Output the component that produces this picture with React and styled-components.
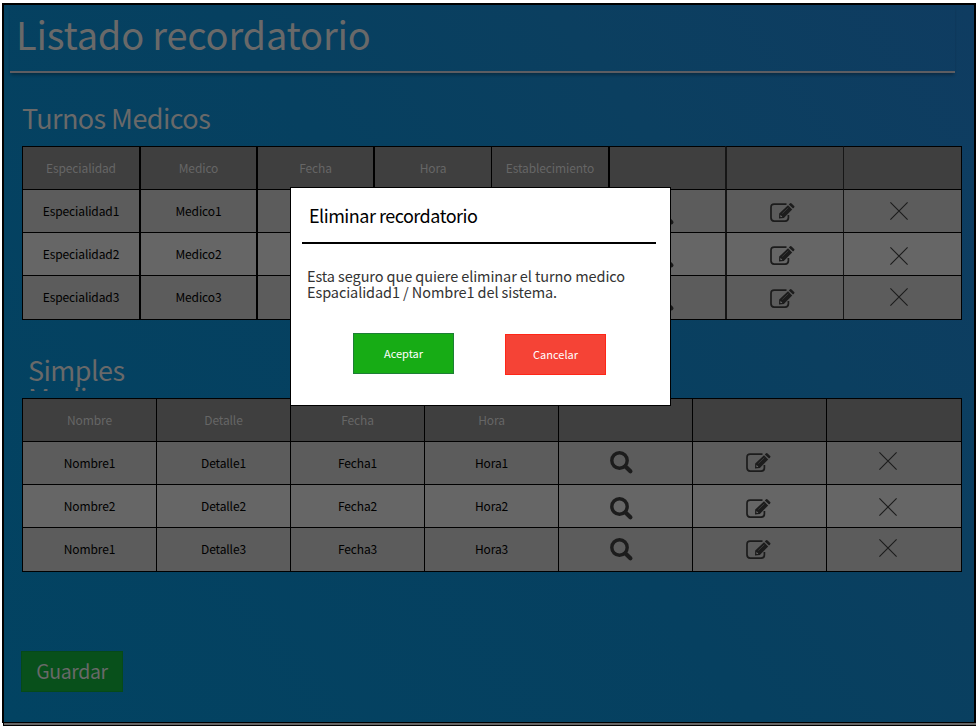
import React from "react";
import styled, { createGlobalStyle } from "styled-components";

const GlobalStyle = createGlobalStyle`
  * { box-sizing: border-box; }
  body { margin: 0; background: #fff; overflow: hidden; }
  body, button { font-family: "Noto Sans CJK JP", "Noto Sans", sans-serif; }
`;

const Window = styled.div`
  position: relative;
  width: 980px;
  height: 727px;
  padding: 3px 0 0 2px;
`;

const Screen = styled.main`
  width: 974px;
  height: 720px;
  border: 2px solid #000;
  border-bottom-width: 1px;
  background: linear-gradient(53deg, #024362 0%, #064060 50%, #0b3f60 72%, #0f3c61 100%);
`;

const BottomEdge = styled.div`
  width: 973px;
  height: 3px;
  margin-left: 1px;
  background: #666;
  border: solid #000;
  border-width: 0 0 1px 1px;
`;

const PageTitle = styled.h1`
  margin: 0 19px 0 6px;
  height: 68px;
  padding-left: 6px;
  font-size: 38px;
  font-weight: 400;
  letter-spacing: -0.2px;
  line-height: 58px;
  color: #696969;
  border-bottom: 2px solid #5d5d62;
  box-shadow: 0 3px 3px -1px rgba(0, 0, 0, 0.3);
`;

const SectionTitle = styled.h2`
  margin: ${(p) => p.$margin};
  width: ${(p) => p.$width}px;
  height: ${(p) => p.$height}px;
  overflow: hidden;
  font-size: 27px;
  font-weight: 400;
  letter-spacing: -0.58px;
  line-height: ${(p) => p.$line}px;
  color: #696969;
`;

const Table = styled.div`
  display: grid;
  grid-template-columns: ${(p) => p.$columns};
  grid-template-rows: 43px 43px 43px 44px;
  width: 940px;
  height: 174px;
  margin-left: 18px;
  border: solid #000;
  border-width: 0 1px 1px 0;
`;

const Cell = styled.div`
  border-top: 1px solid #000;
  border-left: ${(p) => p.$rule}px solid ${(p) => (p.$soft ? "#161616" : "#000")};
  background: ${(p) => p.$bg};
  color: ${(p) => (p.$head ? "#666" : "#000")};
  font-size: 12px;
  letter-spacing: -0.12px;
  line-height: 42px;
  text-align: center;
  white-space: nowrap;
`;

const IconCell = styled(Cell)`
  padding: ${(p) => p.$top}px 0 0 ${(p) => p.$left}px;
  line-height: 0;
  text-align: left;
`;

const SaveButton = styled.button`
  display: block;
  width: 102px;
  height: 41px;
  margin: 79px 0 0 17px;
  padding: 0 0 1px;
  border: 1px solid #064a18;
  background: #08501b;
  color: #696969;
  font-size: 19.5px;
  letter-spacing: -0.4px;
  line-height: 38px;
`;

const Dialog = styled.section`
  position: absolute;
  left: 290px;
  top: 187px;
  width: 381px;
  height: 219px;
  border: 1px solid #000;
  background: #fff;
`;

const DialogTitle = styled.h3`
  margin: 0 14px 0 11px;
  height: 56px;
  padding-left: 7px;
  border-bottom: 2px solid #000;
  font-size: 18px;
  font-weight: 400;
  letter-spacing: -0.5px;
  line-height: 55px;
  color: #000;
`;

const Message = styled.p`
  margin: 24px 0 0 16px;
  font-size: 14.5px;
  letter-spacing: -0.09px;
  line-height: 16px;
  color: #333;
  white-space: nowrap;
`;

const Actions = styled.div`
  display: flex;
  gap: 51px;
  margin: 33px 0 0 62px;
`;

const ActionButton = styled.button`
  width: 101px;
  height: 41px;
  margin-top: ${(p) => (p.$danger ? 1 : 0)}px;
  padding: 0;
  border: 1px solid ${(p) => (p.$danger ? "#ff2617" : "#1d7f35")};
  background: ${(p) => (p.$danger ? "#f54336" : "#17ac15")};
  color: #fff;
  font-size: 11px;
  line-height: 39px;
`;

const SearchIcon = () => (
  <svg width="24" height="24" viewBox="0 0 24 24" fill="none" stroke="#1c1c1c">
    <circle cx="9.5" cy="9.5" r="7.7" strokeWidth="3.4" />
    <path d="M15.5 15.5L20.4 20.3" strokeWidth="4.2" strokeLinecap="round" />
  </svg>
);

const EditIcon = () => (
  <svg width="26" height="20" viewBox="0 0 26 20">
    <path
      d="M16.5 1.1H4.2Q1 1.1 1 4.4V14.8Q1 18.1 4.2 18.1H15.2Q18.4 18.1 18.4 14.8V12"
      fill="none"
      stroke="#1c1c1c"
      strokeWidth="1.7"
    />
    <path d="M9 15.6L9.2 10.6L18 2.2L22.2 6.4L13.8 15Z" fill="#1c1c1c" />
    <path d="M18.8 1.4L20.1 .3Q20.9-.2 21.6.4L24.2 2.9Q24.8 3.6 24.2 4.3L23 5.6Z" fill="#1c1c1c" />
    <path d="M10.5 12L12.3 13.8L10.5 14.1Z" fill="#777" />
    <path d="M12.3 10.5L18.3 4.8" stroke="#4c4c4c" strokeWidth=".6" />
  </svg>
);

const CloseIcon = () => (
  <svg width="18" height="18" viewBox="0 0 18 18" stroke="#1c1c1c">
    <path d="M.4 .4L17.6 17.6M17.6 .4L.4 17.6" strokeWidth="1.1" />
  </svg>
);

const icons = { search: SearchIcon, edit: EditIcon, close: CloseIcon };

const medical = {
  columns: "117px 117px 117px 118px 117px 117px 118px 118px",
  rules: [1, 2, 2, 2, 1, 2, 2, 1],
  head: ["Especialidad", "Medico", "Fecha", "Hora", "Establecimiento", "", "", ""],
  rows: [1, 2, 3].map((n) => [`Especialidad${n}`, `Medico${n}`, "", "", ""]),
  left: { search: 41, edit: 43, close: 46 },
  top: { search: [12, 12, 12], edit: [13, 13, 13], close: [12, 14, 12] },
};

const simple = {
  columns: "134px 134px 134px 134px 134px 134px 135px",
  rules: [1, 1, 1, 1, 1, 1, 1],
  head: ["Nombre", "Detalle", "Fecha", "Hora", "", "", ""],
  rows: [
    ["Nombre1", "Detalle1", "Fecha1", "Hora1"],
    ["Nombre2", "Detalle2", "Fecha2", "Hora2"],
    ["Nombre1", "Detalle3", "Fecha3", "Hora3"],
  ],
  left: { search: 51, edit: 53, close: 52 },
  top: { search: [9, 12, 10], edit: [11, 14, 12], close: [10, 13, 11] },
};

function Reminders({ data }) {
  const offset = data.rows[0].length;
  return (
    <Table $columns={data.columns}>
      {data.head.map((label, i) => (
        <Cell key={i} $head $rule={data.rules[i]} $soft={i > 5 && data === medical} $bg="#3f3f3f">
          {label}
        </Cell>
      ))}
      {data.rows.map((row, r) => {
        const bg = r === 1 ? "#666" : "#5c5c5c";
        return (
          <React.Fragment key={r}>
            {row.map((text, i) => (
              <Cell key={i} $rule={data.rules[i]} $bg={bg}>
                {text}
              </Cell>
            ))}
            {["search", "edit", "close"].map((name, i) => {
              const Icon = icons[name];
              return (
                <IconCell
                  key={name}
                  $rule={data.rules[offset + i]}
                  $soft={i > 0 && data === medical}
                  $bg={bg}
                  $top={data.top[name][r]}
                  $left={data.left[name]}
                >
                  <Icon />
                </IconCell>
              );
            })}
          </React.Fragment>
        );
      })}
    </Table>
  );
}

export default function App() {
  return (
    <>
      <GlobalStyle />
      <Window>
        <Screen>
          <PageTitle>Listado recordatorio</PageTitle>
          <SectionTitle $margin="26px 0 7px 18px" $width={300} $height={40} $line={37}>
            Turnos Medicos
          </SectionTitle>
          <Reminders data={medical} />
          <SectionTitle $margin="36px 0 7px 24px" $width={120} $height={35} $line={28}>
            Simples Medicos
          </SectionTitle>
          <Reminders data={simple} />
          <SaveButton>Guardar</SaveButton>
        </Screen>
        <BottomEdge />
        <Dialog role="dialog">
          <DialogTitle>Eliminar recordatorio</DialogTitle>
          <Message>
            Esta seguro que quiere eliminar el turno medico
            <br />
            Espacialidad1 / Nombre1 del sistema.
          </Message>
          <Actions>
            <ActionButton>Aceptar</ActionButton>
            <ActionButton $danger>Cancelar</ActionButton>
          </Actions>
        </Dialog>
      </Window>
    </>
  );
}
